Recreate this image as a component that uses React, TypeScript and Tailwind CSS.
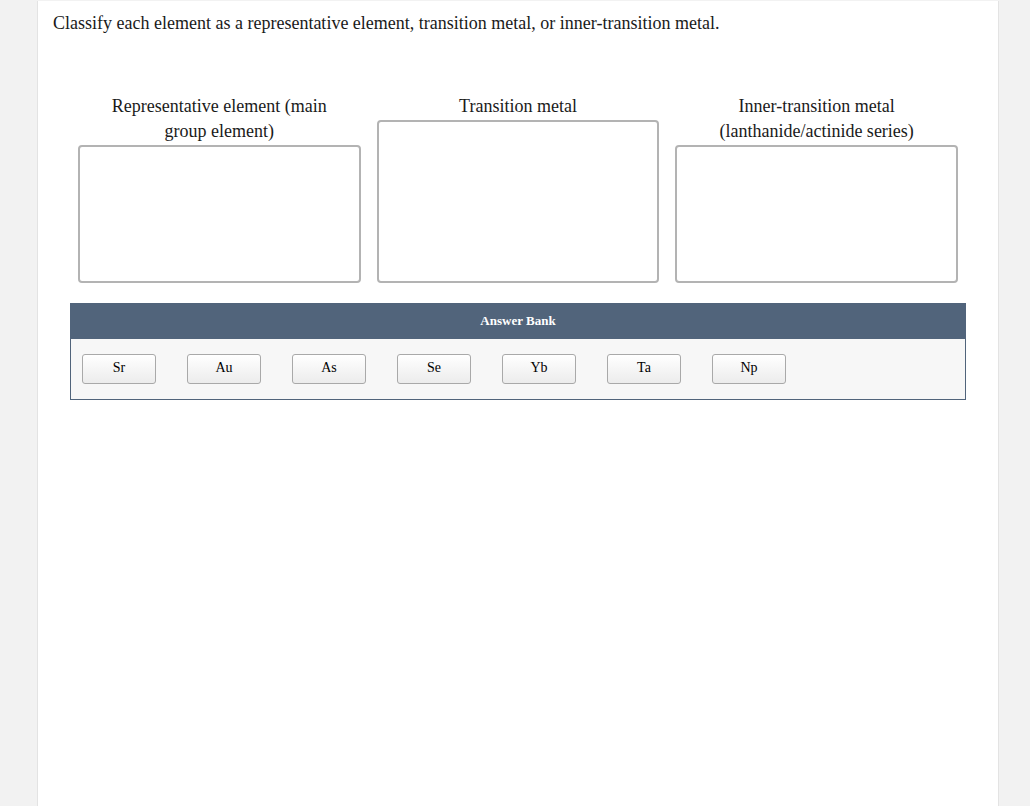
const bins = [
  { id: 'rep', label: 'Representative element (main group element)' },
  { id: 'trans', label: 'Transition metal' },
  { id: 'inner', label: 'Inner-transition metal (lanthanide/actinide series)' },
];

const answers = ['Sr', 'Au', 'As', 'Se', 'Yb', 'Ta', 'Np'];

export default function App() {
  return (
    <div className="min-h-screen bg-[#f2f2f2] pt-px font-['Liberation_Serif',serif] text-[#1a1a1a]">
      <div className="ml-[37px] w-[962px] min-h-[805px] bg-white border-x border-[#e3e3e3]">
        {/* Question */}
        <p className="pl-[15px] pt-[10px] text-[18px] leading-[25px]">
          Classify each element as a representative element, transition metal, or inner-transition metal.
        </p>

        {/* Drop targets */}
        <div className="ml-[40px] mt-[58px] w-[880px] grid grid-cols-3 gap-x-[16px]">
          {bins.map((bin) => (
            <div key={bin.id} className="flex flex-col">
              <div className="px-[28px] text-center text-[18px] leading-[25px]">{bin.label}</div>
              <div className="mt-[1px] flex-1 min-h-[138px] rounded-[4px] border-2 border-[#b3b3b3] bg-white" />
            </div>
          ))}
        </div>

        {/* Answer bank */}
        <div className="ml-[32px] mt-[20px] w-[896px]">
          <div className="h-[36px] flex items-center justify-center bg-[#51647b] text-white text-[13px] font-bold">
            Answer Bank
          </div>
          <div className="flex gap-[31px] px-[11px] py-[15px] bg-[#f7f7f7] border border-t-0 border-[#51647b]">
            {answers.map((a) => (
              <button
                key={a}
                className="w-[74px] h-[30px] pb-[3px] leading-none rounded-[3px] border border-[#a9a9a9] bg-gradient-to-b from-white to-[#ececec] text-[14px] text-black"
              >
                {a}
              </button>
            ))}
          </div>
        </div>
      </div>
    </div>
  );
}
